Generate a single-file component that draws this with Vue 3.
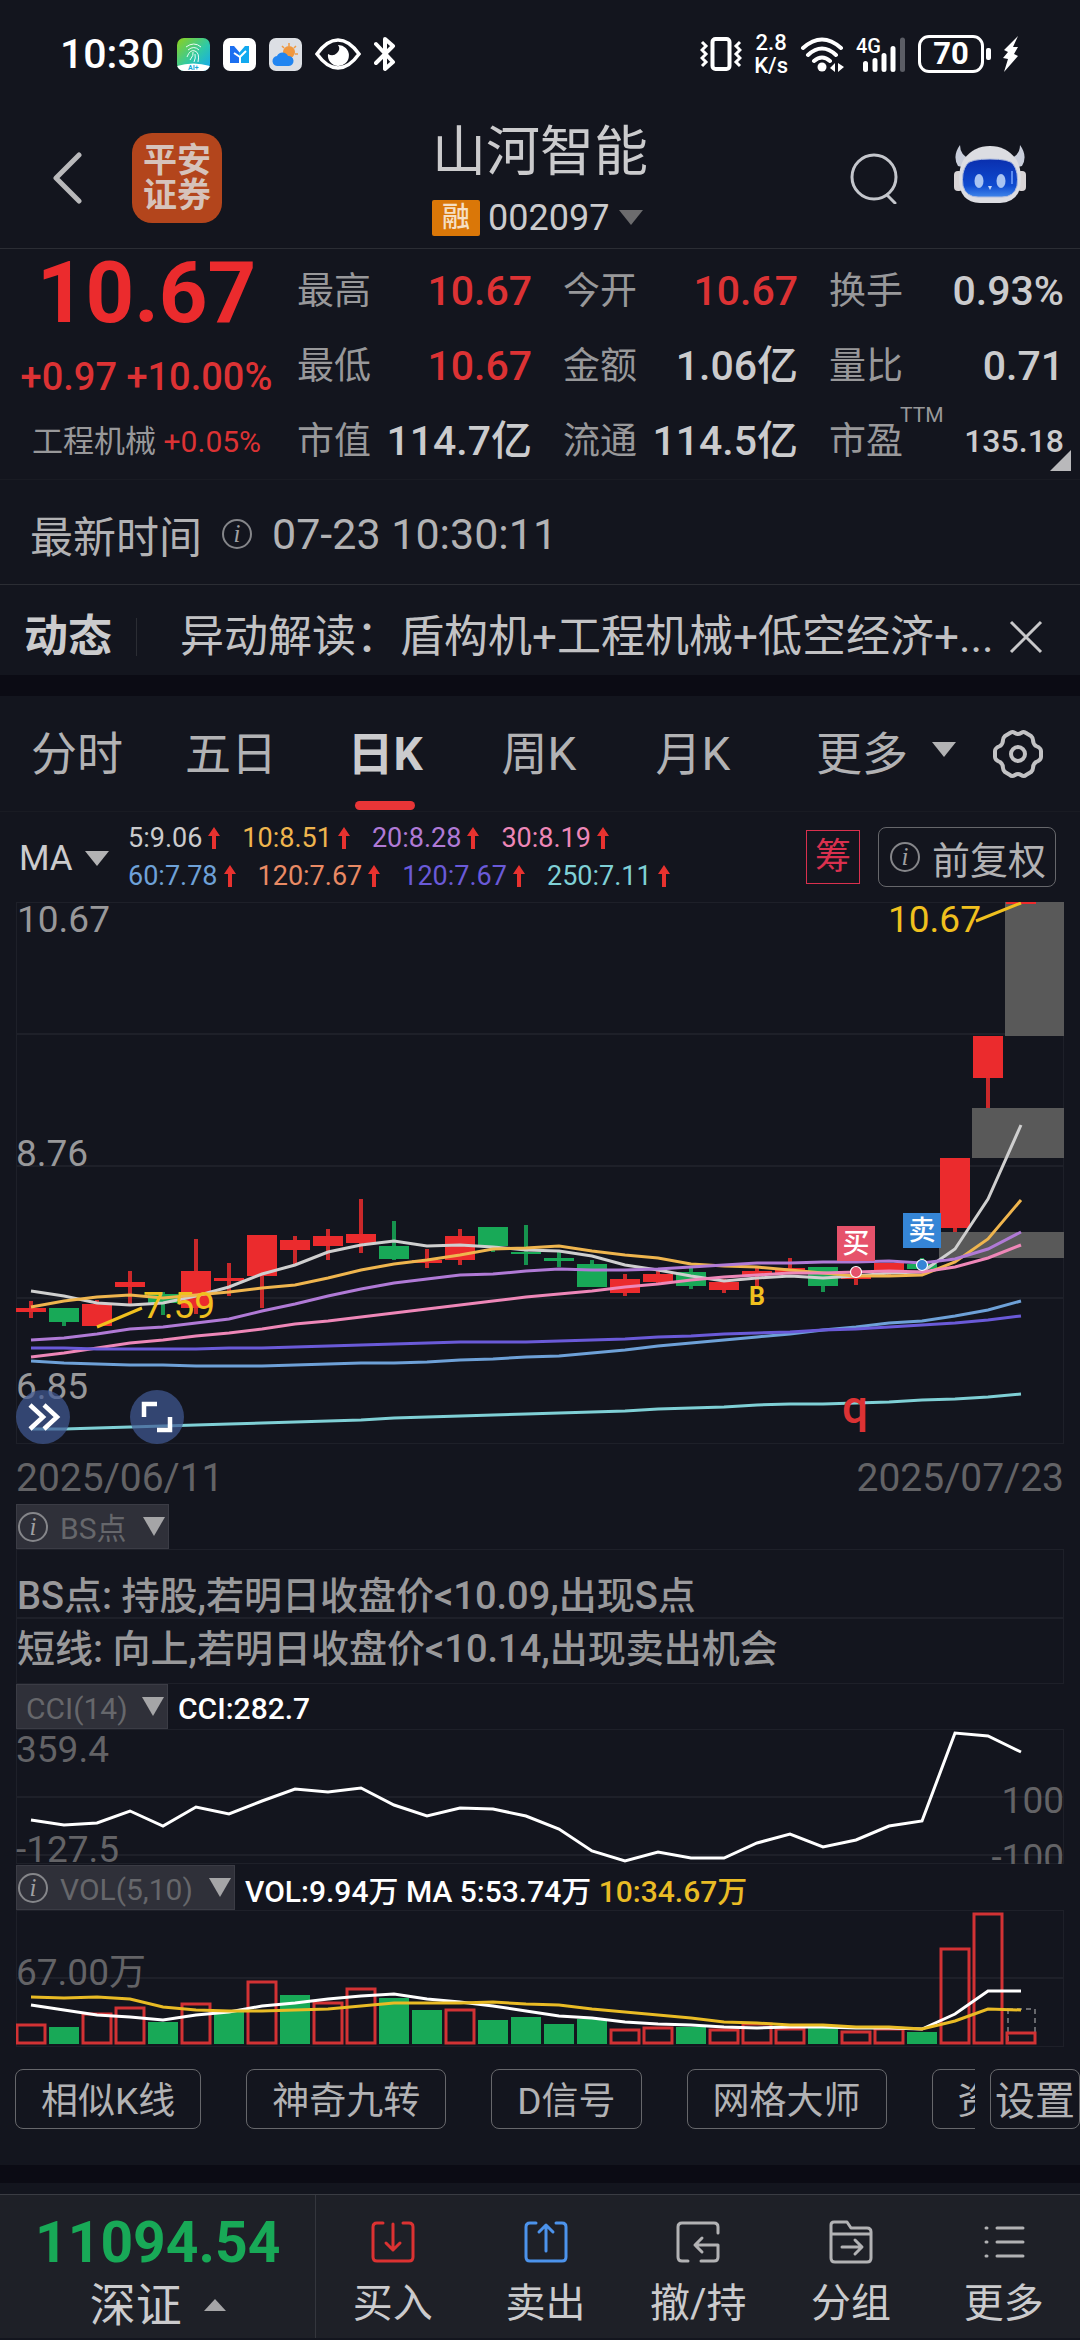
<template>
  <div class="app">
    <!-- Phone status bar -->
    <div class="status">
      <div class="status-side">
        <span class="clock">10:30</span>
        <svg class="mini" viewBox="0 0 33 33">
          <defs>
            <linearGradient id="finger" x1="0" y1="0" x2="1" y2="1">
              <stop offset="0" stop-color="#8fd11a" />
              <stop offset="0.55" stop-color="#2fc9a6" />
              <stop offset="1" stop-color="#12a5f5" />
            </linearGradient>
            <clipPath id="fingerClip"><rect width="33" height="33" rx="7" /></clipPath>
          </defs>
          <g clip-path="url(#fingerClip)">
            <rect width="33" height="33" fill="url(#finger)" />
            <path d="M9 9q8-6 15 0M11 12q6-5 11 0M10 19q3-8 8-6t3 11M13 22q4-5 3-8M17 24q2-4 1-8" fill="none" stroke="#e9fbf4" stroke-width="1" />
            <path d="M0 28q16-5 33 0v5H0z" fill="#fff" />
            <text x="11" y="32" font-size="7" font-weight="700" fill="#14a8d8">AI+</text>
          </g>
        </svg>
        <svg class="mini" viewBox="0 0 33 33">
          <rect width="33" height="33" rx="7" fill="#fff" />
          <path d="M7 8h4l6 7v10H7z" fill="#1c6ff0" />
          <path d="M26 8h-4l-6 7v10h10z" fill="#12a9ef" />
          <path d="M11 15l6 4 6-6M17 19v6" fill="none" stroke="#fff" stroke-width="2" />
        </svg>
        <svg class="mini" viewBox="0 0 33 33">
          <rect width="33" height="33" rx="7" fill="#dcdfe4" />
          <path d="M20 5v3M13 8l2 2M27 8l-2 2M26 16h3" stroke="#ee9a44" stroke-width="1.5" />
          <circle cx="20" cy="14" r="6" fill="#f0983f" />
          <path d="M9 28a5 5 0 0 1-1-10 6 6 0 0 1 11 0 5 5 0 0 1 1 10z" fill="#2185f0" />
        </svg>
        <svg class="eye" viewBox="0 0 46 34">
          <path d="M2 17Q12 3 23 3t21 14Q34 31 23 31T2 17z" fill="none" stroke="#fff" stroke-width="3.5" />
          <path d="M23 8a10.500 10.500 0 1 1-10 9q5 3 9-1t1-8z" fill="#fff" />
        </svg>
        <svg class="bt" viewBox="0 0 22 36">
          <path d="M2 8l17 18-8 7V3l8 7L2 27" fill="none" stroke="#fff" stroke-width="4" stroke-linejoin="round" stroke-linecap="round" />
        </svg>
      </div>
      <div class="status-side right">
        <svg class="vibrate" viewBox="0 0 42 36">
          <rect x="12.500" y="3" width="17" height="30" rx="3" fill="none" stroke="#fff" stroke-width="4" />
          <path d="M2 6l4 4-4 4 4 4-4 4 4 4-4 4M40 6l-4 4 4 4-4 4 4 4-4 4 4 4" fill="none" stroke="#fff" stroke-width="3" />
        </svg>
        <span class="speed">2.8<br />K/s</span>
        <svg class="wifi" viewBox="0 0 44 36">
          <path d="M3 12q19-17 38 0M8 19q14-13 28 0M14 25q8-7 16 0" fill="none" stroke="#fff" stroke-width="4" stroke-linecap="round" />
          <circle cx="22" cy="31" r="4.500" fill="#fff" />
          <path d="M35 27v9l-5-4zM38 27v9l6-5z" fill="#fff" />
        </svg>
        <svg class="signal" viewBox="0 0 50 36">
          <text x="0" y="17" font-size="20" font-weight="500" fill="#fff">4G</text>
          <path d="M9.500 27.500v6M19 24.500v9M28 19.500v14M37 12.500v21" stroke="#fff" stroke-width="5" stroke-linecap="round" />
          <path d="M46.500 4v29.500" stroke="#5b5d65" stroke-width="5" stroke-linecap="round" />
        </svg>
        <div class="battery"><span>70</span></div>
        <svg class="bolt" viewBox="0 0 18 38">
          <path d="M16 1L2 15l4 2-5 6 5 1-4 13 14-16-4-2 4-7h-5z" fill="#fff" />
        </svg>
      </div>
    </div>

    <!-- Title bar -->
    <header class="header">
      <div class="header-left">
        <button class="icon-btn" aria-label="返回">
          <svg width="30" height="52" viewBox="0 0 30 52">
            <path d="M27 3L4 26l23 23" fill="none" stroke="#b9b9bb" stroke-width="5" stroke-linecap="round" stroke-linejoin="round" />
          </svg>
        </button>
        <div class="logo">平安<br />证券</div>
      </div>
      <div class="header-title">
        <h1>山河智能</h1>
        <button class="code">
          <span class="badge">融</span>002097<i class="caret dim"></i>
        </button>
      </div>
      <div class="header-right">
        <button class="icon-btn" aria-label="搜索">
          <svg width="48" height="52" viewBox="0 0 48 52">
            <circle cx="24" cy="25" r="22" fill="none" stroke="#c4c6cc" stroke-width="3" />
            <path d="M37 43l8 8" stroke="#c4c6cc" stroke-width="3" stroke-linecap="round" />
          </svg>
        </button>
        <button class="icon-btn robot" aria-label="智能助手">
          <svg width="72" height="60" viewBox="0 0 72 60">
            <defs>
              <linearGradient id="face" x1="0" y1="0" x2="0" y2="1">
                <stop offset="0" stop-color="#0a2fae" />
                <stop offset="0.7" stop-color="#0f4bd0" />
                <stop offset="1" stop-color="#3f86ea" />
              </linearGradient>
            </defs>
            <path d="M6 1Q-2 12 4 22l8 2 4-9Q6 11 6 1zM66 1q8 11 2 21l-8 2-4-9q10-4 10-14z" fill="#c9cedb" />
            <rect x="0" y="27" width="9" height="20" rx="4" fill="#d8d4d6" />
            <rect x="63" y="27" width="9" height="20" rx="4" fill="#d8d4d6" />
            <path d="M10 15Q20 2 36 2t26 13q5 8 5 20 0 23-21 24H26Q5 58 5 35 5 23 10 15z" fill="#dcdde2" />
            <path d="M13 20q4-5 23-5t23 5q6 8 4 22-3 11-15 11H24q-12 0-15-11-2-14 4-22z" fill="url(#face)" stroke="#aebcdf" stroke-width="1" />
            <ellipse cx="25" cy="37" rx="4.500" ry="7" fill="#a9c4f2" />
            <ellipse cx="47" cy="37" rx="4.500" ry="7" fill="#a9c4f2" />
            <path d="M34 42h4l-2 4z" fill="#c5d6f5" />
            <path d="M58 27v13" stroke="#5b8cf0" stroke-width="2" />
          </svg>
        </button>
      </div>
    </header>

    <!-- Quote -->
    <section class="quote">
      <div class="quote-main">
        <div class="price">10.67</div>
        <div class="change">+0.97 +10.00%</div>
        <div class="sector">工程机械 <span>+0.05%</span></div>
      </div>
      <dl class="quote-grid">
        <div v-for="q in quotes" :key="q.label" class="cell">
          <dt>{{ q.label }}<sup v-if="q.sup">{{ q.sup }}</sup></dt>
          <dd :class="{ up: q.up, small: q.sup }">{{ q.value }}</dd>
        </div>
      </dl>
      <i class="corner"></i>
    </section>

    <div class="time-row">
      <span>最新时间</span><i class="info">i</i><span>07-23 10:30:11</span>
    </div>

    <div class="news">
      <strong>动态</strong>
      <a href="#" class="news-text">异动解读：盾构机+工程机械+低空经济+...</a>
      <button class="icon-btn" aria-label="关闭">
        <svg width="34" height="34" viewBox="0 0 34 34">
          <path d="M2 2l30 30M32 2L2 32" stroke="#c8c8ca" stroke-width="3" />
        </svg>
      </button>
    </div>

    <!-- Period tabs -->
    <nav class="tabs">
      <button
        v-for="tab in tabs"
        :key="tab"
        class="tab"
        :class="{ active: tab === activeTab }"
        @click="activeTab = tab"
      >
        {{ tab }}
      </button>
      <button class="tab more">更多<i class="caret"></i></button>
      <button class="tab gear" aria-label="图表设置">
        <svg width="50" height="50" viewBox="0 0 50 50">
          <path d="M17 4q2-2 5 0 3 2 6 0 3-2 5 0l5 3q2 2 2 4 0 4 3 6 5 2 5 5v6q0 3-5 5-3 2-3 6 0 2-2 4l-5 3q-2 2-5 0-3-2-6 0-3 2-5 0l-5-3q-2-2-2-4 0-4-3-6-5-2-5-5v-6q0-3 5-5 3-2 3-6 0-2 2-4z" fill="none" stroke="#c2c2c4" stroke-width="4" stroke-linejoin="round" />
          <circle cx="25" cy="25" r="7" fill="none" stroke="#c2c2c4" stroke-width="4" />
        </svg>
      </button>
    </nav>

    <div class="ma-row">
      <label class="ma-select">
        <select aria-label="主图指标">
          <option>MA</option>
        </select>
        <i class="caret"></i>
      </label>
      <div class="ma-list">
        <div v-for="(row, r) in maRows" :key="r" class="ma-line">
          <span v-for="(m, k) in row" :key="k" :class="m.cls">
            {{ m.text }}
            <svg width="14" height="22" viewBox="0 0 14 22">
              <path d="M7 0l6 9H9v13H5V9H1z" fill="#e8322f" />
            </svg>
          </span>
        </div>
      </div>
      <button class="chips">筹</button>
      <button class="adjust"><i class="info">i</i>前复权</button>
    </div>

    <!-- Charts -->
    <main class="charts">
      <div class="kline">
        <svg viewBox="0 0 1048 542">
          <g class="grid">
            <rect width="1048" height="542" />
            <path d="M0 132H1048M0 264H1048M0 396H1048" />
          </g>
          <rect v-for="g in gaps" :key="g[0]" :x="g[0]" :y="g[1]" :width="1048 - g[0]" :height="g[2] - g[1]" fill="#595959" />
          <g v-for="(c, i) in candles" :key="i" :fill="c[0] ? '#eb2b2d' : '#18a957'">
            <rect :x="cx(i) - 2" :y="c[1]" width="4" :height="c[4] - c[1]" opacity="0.85" />
            <rect :x="cx(i) - 15" :y="c[2]" width="30" :height="c[3] - c[2]" />
          </g>
          <polyline v-for="(l, i) in maLines" :key="i" :points="toPoints(l.data)" :stroke="l.color" class="line" />
          <g class="axis">
            <text x="1" y="30">10.67</text>
            <text x="0" y="264">8.76</text>
            <text x="0" y="497">6.85</text>
          </g>
          <g class="extreme">
            <path d="M960 19L1005 1M81 425L126 406" />
            <text x="872" y="30">10.67</text>
            <text x="127" y="416">7.59</text>
          </g>
          <text x="741" y="403" class="b-mark">B</text>
          <text x="839" y="521" class="q-mark">q</text>
          <rect x="821" y="324" width="38" height="35" fill="#e6526b" />
          <text x="840" y="351" class="deal">买</text>
          <circle cx="840" cy="370" r="5.500" fill="#e6526b" stroke="#fff" stroke-width="1.200" />
          <rect x="887" y="311" width="38" height="35" fill="#3585d6" />
          <text x="906" y="338" class="deal">卖</text>
          <circle cx="906" cy="363" r="5.500" fill="#3585d6" stroke="#fff" stroke-width="1.200" />
        </svg>
        <div class="float-tools">
          <button aria-label="展开">
            <svg width="54" height="54" viewBox="0 0 54 54">
              <path d="M14 15l13 12-13 12M28 15l13 12-13 12" fill="none" stroke="#fff" stroke-width="4.500" />
            </svg>
          </button>
          <button aria-label="全屏">
            <svg width="54" height="54" viewBox="0 0 54 54">
              <path d="M14 27V14h13M27 40h13V27" fill="none" stroke="#fff" stroke-width="4.500" />
            </svg>
          </button>
        </div>
      </div>
      <div class="dates"><span>2025/06/11</span><span>2025/07/23</span></div>

      <div class="ind-head">
        <label class="pill">
          <i class="info">i</i>
          <select aria-label="副图指标一"><option>BS点</option></select>
          <i class="caret tall"></i>
        </label>
      </div>
      <div class="tips">
        <p>BS点: 持股,若明日收盘价&lt;10.09,出现S点</p>
        <p>短线: 向上,若明日收盘价&lt;10.14,出现卖出机会</p>
      </div>

      <div class="ind-head">
        <label class="pill plain">
          <select aria-label="副图指标二"><option>CCI(14)</option></select>
          <i class="caret tall"></i>
        </label>
        <span>CCI:282.7</span>
      </div>
      <svg viewBox="0 0 1048 135" class="sub">
        <g class="grid">
          <rect width="1048" height="135" />
          <path d="M0 68H1048M0 126H1048" />
        </g>
        <g class="axis dim">
          <text x="0" y="33">359.4</text>
          <text x="0" y="133">-127.5</text>
          <text x="1048" y="84" text-anchor="end">100</text>
          <text x="1048" y="141" text-anchor="end">-100</text>
        </g>
        <polyline :points="toPoints(cci)" stroke="#fff" class="line" />
      </svg>

      <div class="ind-head">
        <label class="pill">
          <i class="info">i</i>
          <select aria-label="副图指标三"><option>VOL(5,10)</option></select>
          <i class="caret tall"></i>
        </label>
        <span>VOL:9.94万 MA 5:53.74万 <em>10:34.67万</em></span>
      </div>
      <svg viewBox="0 0 1048 137" class="sub">
        <g class="grid">
          <rect width="1048" height="137" />
          <path d="M0 68H1048" />
        </g>
        <g class="axis dim"><text x="0" y="75">67.00万</text></g>
        <rect x="992" y="99" width="27" height="34" fill="none" stroke="#66676c" stroke-width="2" stroke-dasharray="5 4" />
        <template v-for="(v, i) in volumes" :key="i">
          <rect v-if="volDown.includes(i)" :x="cx(i) - 15" :y="v" width="30" :height="134 - v" fill="#18a957" />
          <rect v-else :x="cx(i) - 14" :y="v + 1" width="28" :height="132 - v" fill="none" stroke="#d23234" stroke-width="3" />
        </template>
        <polyline :points="toPoints(vol5)" stroke="#fff" class="line" />
        <polyline :points="toPoints(vol10)" stroke="#e9bb25" class="line" />
      </svg>
    </main>

    <div class="tools">
      <div class="tools-scroll">
        <button v-for="t in tools" :key="t">{{ t }}</button>
      </div>
      <button class="setting">设置</button>
    </div>

    <!-- Bottom bar -->
    <footer class="footer">
      <button class="index">
        <strong>11094.54</strong>
        <span>深证<i class="caret-up"></i></span>
      </button>
      <button v-for="a in actions" :key="a.label" class="action">
        <svg width="44" height="44" viewBox="0 0 44 44" fill="none" :stroke="a.color" stroke-width="3" stroke-linecap="round" stroke-linejoin="round">
          <path :d="a.path" />
        </svg>
        <span>{{ a.label }}</span>
      </button>
    </footer>
  </div>
</template>

<script setup>
import { ref } from 'vue'

const quotes = [
  { label: '最高', value: '10.67', up: true },
  { label: '今开', value: '10.67', up: true },
  { label: '换手', value: '0.93%' },
  { label: '最低', value: '10.67', up: true },
  { label: '金额', value: '1.06亿' },
  { label: '量比', value: '0.71' },
  { label: '市值', value: '114.7亿' },
  { label: '流通', value: '114.5亿' },
  { label: '市盈', value: '135.18', sup: 'TTM' }
]

const tabs = ['分时', '五日', '日K', '周K', '月K']
const activeTab = ref('日K')

const maRows = [
  [
    { text: '5:9.06', cls: 'ma5' },
    { text: '10:8.51', cls: 'ma10' },
    { text: '20:8.28', cls: 'ma20' },
    { text: '30:8.19', cls: 'ma30' }
  ],
  [
    { text: '60:7.78', cls: 'ma60' },
    { text: '120:7.67', cls: 'ma120' },
    { text: '120:7.67', cls: 'ma120b' },
    { text: '250:7.11', cls: 'ma250' }
  ]
]

// x centre of the i-th trading day
const cx = (i) => 15 + i * 33
const toPoints = (data) => data.map((y, i) => `${cx(i)},${y}`).join(' ')

// [rising, high, body top, body bottom, low]
const candles = [
  [1, 399, 406, 410, 416], [0, 406, 406, 420, 424], [1, 398, 402, 424, 424],
  [1, 369, 380, 385, 402], [0, 390, 392, 401, 413], [1, 337, 369, 406, 412],
  [1, 361, 376, 379, 394], [1, 333, 333, 374, 406], [1, 334, 338, 348, 364],
  [1, 327, 334, 344, 358], [1, 297, 332, 341, 351], [0, 319, 344, 357, 358],
  [1, 347, 358, 361, 366], [1, 327, 334, 358, 363], [0, 325, 325, 344, 350],
  [0, 323, 350, 352, 363], [0, 348, 356, 359, 365], [0, 358, 362, 385, 385],
  [1, 372, 377, 391, 394], [1, 368, 372, 380, 381], [0, 365, 370, 384, 387],
  [1, 377, 380, 388, 391], [1, 366, 369, 373, 384], [1, 356, 366, 371, 371],
  [0, 365, 365, 384, 390], [1, 370, 374, 377, 383], [1, 361, 361, 370, 375],
  [0, 356, 362, 367, 368], [1, 256, 256, 326, 330], [1, 134, 134, 176, 206],
  [1, 0, 0, 2, 2]
]

// price gaps: [x, top, bottom]
const gaps = [
  [989, 0, 134],
  [956, 206, 256],
  [923, 330, 356]
]

const maLines = [
  { color: '#cfcfcf', data: [389, 394, 401, 403, 401, 394, 385, 372, 363, 350, 343, 339, 344, 343, 345, 348, 349, 354, 363, 368, 374, 379, 376, 374, 376, 374, 371, 370, 347, 297, 223] },
  { color: '#efb54e', data: [405, 399, 395, 393, 396, 393, 390, 386, 383, 376, 368, 362, 358, 353, 347, 346, 344, 349, 353, 356, 362, 364, 365, 368, 371, 374, 374, 373, 360, 337, 298] },
  { color: '#b07ad6', data: [438, 436, 432, 427, 425, 421, 417, 409, 402, 394, 387, 381, 377, 373, 372, 369, 367, 368, 368, 367, 365, 363, 361, 361, 360, 360, 359, 361, 357, 347, 330] },
  { color: '#ee87b8', data: [455, 451, 446, 441, 438, 434, 431, 427, 422, 419, 415, 411, 407, 403, 399, 395, 392, 389, 385, 382, 378, 375, 373, 371, 371, 370, 369, 370, 365, 356, 343] },
  { color: '#6ea1d8', data: [459, 461, 462, 463, 463, 464, 464, 464, 463, 462, 461, 461, 460, 458, 457, 455, 454, 451, 448, 444, 441, 438, 435, 432, 428, 425, 421, 419, 414, 408, 399] },
  { color: '#6a5ad8', data: [446, 446, 447, 447, 447, 447, 446, 446, 445, 444, 443, 442, 441, 440, 440, 440, 439, 438, 437, 435, 434, 432, 431, 430, 428, 427, 425, 423, 421, 418, 414] },
  { color: '#7fd0d6', data: [527, 527, 526, 525, 524, 523, 522, 521, 520, 519, 518, 516, 515, 514, 513, 512, 511, 510, 509, 507, 506, 505, 503, 502, 502, 501, 500, 498, 497, 495, 492] }
]

const cci = [91, 96, 94, 82, 97, 78, 85, 72, 60, 63, 59, 76, 87, 79, 80, 87, 100, 122, 132, 123, 129, 129, 114, 105, 118, 111, 97, 92, 4, 7, 23]

const volumes = [114, 117, 103, 97, 112, 93, 102, 71, 85, 92, 78, 88, 100, 99, 110, 107, 114, 109, 119, 117, 117, 119, 113, 118, 118, 121, 118, 122, 38, 3, 122]
const volDown = [1, 4, 6, 8, 11, 12, 14, 15, 16, 17, 20, 24, 27]
const vol5 = [95, 100, 105, 107, 110, 105, 102, 96, 93, 89, 86, 84, 89, 92, 96, 101, 106, 108, 112, 114, 115, 117, 118, 117, 117, 118, 118, 119, 104, 81, 81]
const vol10 = [87, 88, 87, 89, 97, 100, 101, 101, 100, 99, 96, 93, 93, 93, 92, 94, 95, 99, 102, 105, 108, 112, 113, 115, 115, 117, 117, 119, 111, 99, 100]

const tools = ['相似K线', '神奇九转', 'D信号', '网格大师', '资金']

const actions = [
  { label: '买入', color: '#dc3232', path: 'M12 3H6q-4 0-4 4v30q0 4 4 4h32q4 0 4-4V7q0-4-4-4h-6M22 4v26M15 23l7 7 7-7' },
  { label: '卖出', color: '#4c93ec', path: 'M12 3H6q-4 0-4 4v30q0 4 4 4h32q4 0 4-4V7q0-4-4-4h-6M22 31V5M15 12l7-7 7 7' },
  { label: '撤/持', color: '#b2b2b4', path: 'M42 13V7q0-4-4-4H6q-4 0-4 4v30q0 4 4 4h6M25 41h13q4 0 4-4V25H19M26 18l-7 7 7 7' },
  { label: '分组', color: '#b2b2b4', path: 'M2 14V5q0-3 3-3h13l4 6h16q4 0 4 4v26q0 4-4 4H6q-4 0-4-4V14H42M13 27h19M26 20l7 7-7 7' },
  { label: '更多', color: '#b2b2b4', path: 'M4 8h1M15 8h26M4 22h1M15 22h26M4 36h1M15 36h26' }
]
</script>

<style>
body {
  background: #13151e;
}
</style>

<style scoped>
.app {
  min-height: 100vh;
  background: #13151e;
  color: #cbcbcd;
  font-family: Roboto, 'Noto Sans CJK SC', sans-serif;
  overflow: hidden;
}
svg {
  display: block;
  flex: none;
}
button,
select {
  font: inherit;
  color: inherit;
  background: none;
  border: none;
  padding: 0;
  margin: 0;
}
select {
  appearance: none;
}
.icon-btn {
  flex: none;
}
.caret {
  flex: none;
  border: 12px solid transparent;
  border-top: 15px solid #b2b2b4;
  border-bottom: 0;
}
.caret.dim {
  border-top-color: #6c6c6e;
}
.caret.tall {
  border-width: 19px 11px 0;
  border-top-color: #a5a5a7;
}
.caret-up {
  border: 11px solid transparent;
  border-bottom: 12px solid #a5a5a7;
  border-top: 0;
}
.info {
  display: flex;
  align-items: center;
  justify-content: center;
  flex: none;
  box-sizing: border-box;
  width: 30px;
  height: 30px;
  border: 2px solid #85868a;
  border-radius: 50%;
  color: #a0a0a3;
  font: italic 25px/26px 'Liberation Serif', serif;
}

/* status bar */
.status {
  display: flex;
  justify-content: space-between;
  align-items: center;
  height: 108px;
  padding: 0 60px;
  color: #fff;
}
.status-side {
  display: flex;
  align-items: center;
  gap: 13px;
}
.status-side.right {
  gap: 12px;
}
.clock {
  font-size: 41px;
  font-weight: 500;
}
.mini {
  width: 33px;
  height: 33px;
}
.eye {
  width: 46px;
  height: 34px;
}
.bt {
  width: 22px;
  height: 36px;
}
.vibrate {
  width: 42px;
  height: 36px;
}
.speed {
  font-size: 22px;
  font-weight: 500;
  line-height: 23px;
  text-align: center;
}
.wifi {
  width: 44px;
  height: 36px;
}
.signal {
  width: 50px;
  height: 36px;
}
.battery {
  position: relative;
  box-sizing: border-box;
  width: 66px;
  height: 38px;
  margin-right: 6px;
  border: 3px solid #fff;
  border-radius: 11px;
  font-size: 31px;
  font-weight: 700;
  line-height: 32px;
  text-align: center;
}
.battery::after {
  content: '';
  position: absolute;
  right: -10px;
  top: 10px;
  width: 5px;
  height: 12px;
  border-radius: 2px;
  background: #fff;
}
.bolt {
  width: 18px;
  height: 38px;
}

/* header */
.header {
  display: grid;
  grid-template-columns: 1fr auto 1fr;
  align-items: center;
  height: 140px;
  border-bottom: 1px solid #2b2d34;
}
.header-left {
  display: flex;
  align-items: center;
  gap: 50px;
  padding-left: 52px;
}
.logo {
  width: 90px;
  height: 90px;
  box-sizing: border-box;
  padding-top: 10px;
  border-radius: 20px;
  background: #b3451c;
  color: #d6c3bb;
  font-size: 34px;
  font-weight: 700;
  line-height: 35px;
  text-align: center;
}
.header-title {
  padding-bottom: 4px;
}
.header-title h1 {
  margin: 0 0 11px;
  font-size: 54px;
  font-weight: 400;
  line-height: 72px;
}
.code {
  display: flex;
  align-items: center;
  font-size: 36px;
  line-height: 36px;
}
.badge {
  width: 48px;
  margin-right: 8px;
  border-radius: 2px;
  background: #da7708;
  color: #f5dfc4;
  font-size: 28px;
  font-weight: 500;
  text-align: center;
}
.code .caret {
  margin-left: 10px;
}
.header-right {
  display: flex;
  align-items: center;
  justify-content: flex-end;
  gap: 56px;
  padding-right: 54px;
}
.robot {
  padding-bottom: 8px;
}

/* quote */
.quote {
  position: relative;
  display: flex;
  padding: 5px 16px 0 0;
}
.quote-main {
  flex: none;
  width: 293px;
  padding-right: 4px;
  text-align: center;
}
.price {
  color: #eb2b2d;
  font-size: 85px;
  font-weight: 700;
  line-height: 78px;
}
.change {
  color: #dc3234;
  font-size: 38px;
  font-weight: 500;
  line-height: 90px;
}
.sector {
  color: #98989a;
  font-size: 31px;
  line-height: 40px;
}
.sector span {
  color: #dc3234;
  font-size: 30px;
}
.quote-grid {
  flex: 1;
  display: grid;
  grid-template-columns: repeat(3, 1fr);
  column-gap: 31px;
  margin: 0;
}
.cell {
  display: flex;
  justify-content: space-between;
  line-height: 75px;
}
.cell dt {
  position: relative;
  color: #98989a;
  font-size: 37px;
}
.cell sup {
  position: absolute;
  left: 71px;
  top: 0;
  font-size: 21px;
  line-height: 22px;
}
.cell dd {
  margin: 0;
  font-size: 41px;
  font-weight: 500;
}
.cell dd.up {
  color: #dc3234;
}
.cell dd.small {
  font-size: 32px;
}
.corner {
  position: absolute;
  right: 9px;
  bottom: 8px;
  border-left: 21px solid transparent;
  border-bottom: 21px solid #b9b9bb;
}

.time-row {
  display: flex;
  align-items: center;
  height: 101px;
  padding: 3px 30px 0;
  border-top: 1px solid #191b23;
  color: #b2b2b4;
  font-size: 43px;
}
.time-row .info {
  margin: 0 20px;
}

/* news */
.news {
  display: flex;
  align-items: center;
  height: 77px;
  padding: 13px 37px 0 24px;
  border-top: 1px solid #2b2d34;
  border-bottom: 21px solid #0b0b14;
  font-size: 44px;
}
.news strong {
  padding-right: 24px;
  border-right: 1px solid #2b2d34;
  line-height: 38px;
}
.news-text {
  flex: 1;
  min-width: 0;
  margin: 0 12px 0 43px;
  color: #c2c2c4;
  line-height: 60px;
  text-decoration: none;
  white-space: nowrap;
  overflow: hidden;
}

/* tabs */
.tabs {
  display: flex;
  height: 115px;
  border-bottom: 1px solid #191b23;
  color: #b2b2b4;
  font-size: 46px;
}
.tab {
  position: relative;
  flex: 154;
  padding-bottom: 8px;
}
.tab.active {
  color: #cbcbcd;
  font-weight: 700;
}
.tab.active::after {
  content: '';
  position: absolute;
  left: 50%;
  bottom: 1px;
  width: 60px;
  height: 9px;
  margin-left: -30px;
  border-radius: 5px;
  background: #e83537;
}
.tab.more {
  display: flex;
  flex: 186;
  align-items: center;
  justify-content: flex-end;
  gap: 24px;
}
.tab.gear {
  display: flex;
  flex: 124;
  align-items: center;
  justify-content: center;
  padding-bottom: 0;
}

/* moving averages */
.ma-row {
  display: flex;
  align-items: center;
  height: 90px;
  padding: 0 24px 0 19px;
}
.ma-select {
  display: flex;
  align-items: center;
  gap: 12px;
  margin-right: 19px;
  padding-top: 3px;
  font-size: 35px;
}
.ma-list {
  flex: 1;
  font-size: 27px;
  line-height: 38px;
}
.ma-line {
  display: flex;
  gap: 21px;
}
.ma-line span {
  display: flex;
  align-items: center;
  gap: 5px;
}
.ma10 {
  color: #efb54e;
}
.ma20 {
  color: #b07ad6;
}
.ma30 {
  color: #ee87b8;
}
.ma60 {
  color: #6ea1d8;
}
.ma120 {
  color: #e98a64;
}
.ma120b {
  color: #6a5ad8;
}
.ma250 {
  color: #7fd0d6;
}
.chips {
  width: 54px;
  height: 54px;
  margin-right: 18px;
  border: 1px solid #d9304e;
  color: #d9304e;
  font-size: 36px;
  line-height: 50px;
}
.adjust {
  display: flex;
  align-items: center;
  gap: 12px;
  height: 60px;
  padding: 0 9px 0 11px;
  border: 1px solid #66676b;
  border-radius: 8px;
  color: #b2b2b4;
  font-size: 38px;
}

/* charts */
.charts {
  padding: 0 16px;
}
.charts > svg,
.kline > svg {
  width: 100%;
  height: auto;
}
.kline {
  position: relative;
}
.grid {
  fill: none;
  stroke: #1e2029;
  stroke-width: 2;
}
.line {
  fill: none;
  stroke-width: 3;
}
.axis {
  font-size: 37px;
  fill: #98989a;
}
.axis.dim {
  fill: #636366;
}
.extreme {
  font-size: 37px;
  fill: #f0c01e;
}
.extreme path {
  fill: none;
  stroke: #f0c01e;
  stroke-width: 3;
}
.b-mark {
  fill: #f0c01e;
  font-size: 25px;
  font-weight: 700;
  text-anchor: middle;
}
.q-mark {
  fill: #dc3234;
  font-size: 46px;
  font-weight: 500;
  text-anchor: middle;
}
.deal {
  fill: #fff;
  font-size: 27px;
  font-weight: 500;
  text-anchor: middle;
}
.float-tools {
  position: absolute;
  left: 0;
  bottom: 0;
  display: flex;
  gap: 60px;
}
.float-tools button {
  border-radius: 50%;
  background: rgba(66, 90, 148, 0.7);
}
.dates {
  display: flex;
  justify-content: space-between;
  height: 60px;
  line-height: 68px;
  color: #636366;
  font-size: 39px;
}
.ind-head {
  display: flex;
  align-items: center;
  gap: 10px;
  height: 45px;
  color: #fff;
  font-size: 30px;
  font-weight: 500;
}
.ind-head span {
  padding-top: 3px;
}
.ind-head em {
  color: #e9bb25;
  font-style: normal;
}
.pill {
  display: flex;
  align-items: center;
  box-sizing: border-box;
  height: 45px;
  padding: 0 3px 0 1px;
  border: 1px solid #3b3c45;
  background: #2f3039;
  color: #66676b;
  font-weight: 400;
}
.pill select {
  margin: 3px 16px 0 12px;
}
.pill.plain select {
  margin-left: 8px;
  margin-right: 14px;
}
.tips {
  height: 135px;
  border: 1px solid #1e2029;
  box-sizing: border-box;
  color: #98989a;
  font-size: 38px;
  font-weight: 500;
}
.tips p {
  margin: 0;
  line-height: 60px;
}
.tips p:first-child {
  padding-top: 27px;
  padding-bottom: 2px;
  line-height: 38px;
  border-bottom: 2px solid #1e2029;
}
.sub {
  overflow: hidden;
  margin-bottom: 1px;
}

/* tool buttons */
.tools {
  display: flex;
  gap: 15px;
  padding: 21px 0 36px 15px;
  border-bottom: 18px solid #0b0b14;
  color: #b2b2b4;
  font-size: 37px;
}
.tools-scroll {
  flex: 1;
  min-width: 0;
  display: flex;
  gap: 45px;
  overflow: hidden;
}
.tools button {
  flex: none;
  height: 60px;
  padding: 5px 25px 0;
  border: 1px solid #66676b;
  border-radius: 8px;
  line-height: 52px;
  white-space: nowrap;
}
.tools .setting {
  padding: 5px 4px 0;
  font-size: 40px;
}

/* footer */
.footer {
  display: flex;
  height: 143px;
  margin-top: 11px;
  border-top: 1px solid #3a3c43;
  background: #1e2027;
}
.index {
  flex: 316;
  display: flex;
  flex-direction: column;
  align-items: center;
  padding-top: 14px;
  border-right: 1px solid #34363d;
}
.index strong {
  color: #18a957;
  font-size: 57px;
  line-height: 68px;
}
.index span {
  display: flex;
  align-items: center;
  gap: 22px;
  font-size: 46px;
  line-height: 56px;
}
.action {
  flex: 153;
  display: flex;
  flex-direction: column;
  align-items: center;
  gap: 12px;
  padding-top: 25px;
}
.action span {
  font-size: 40px;
  line-height: 56px;
}
</style>
